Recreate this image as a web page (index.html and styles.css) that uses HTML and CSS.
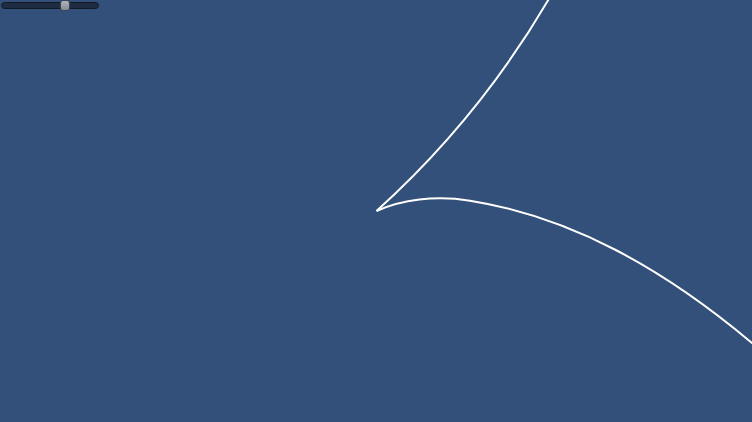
FILE: index.html
```html
<!DOCTYPE html>
<html>
<head>
<meta charset="utf-8">
<link rel="stylesheet" href="styles.css">
</head>
<body>
<div class="stage">
  <div class="toolbar">
    <div class="slider">
      <div class="track"></div>
      <div class="thumb"></div>
    </div>
  </div>
  <svg class="canvas" width="752" height="422" viewBox="0 0 752 422">
    <path class="curve" d="M550,-3 Q480,117.5 376.5,211"/>
    <path class="curve" d="M376.5,211 C401.5,199.75 435,195.1 470,200.7 C570,216.7 662,267.4 752,343 L758,348"/>
  </svg>
</div>
</body>
</html>
```

FILE: styles.css
```css
html, body {
  margin: 0;
  padding: 0;
  background: #32507a;
  overflow: hidden;
}
.stage {
  position: relative;
  width: 752px;
  height: 422px;
  background: #32507a;
}
.toolbar {
  position: relative;
  z-index: 2;
  padding: 0 0 0 1px;
}
.slider {
  position: relative;
  width: 98px;
  height: 11px;
}
.track {
  position: absolute;
  left: 0;
  top: 2px;
  width: 98px;
  height: 7px;
  box-sizing: border-box;
  border: 1px solid #121a28;
  border-radius: 4px;
  background: #1e2b40;
}
.thumb {
  position: absolute;
  left: 59px;
  top: 0;
  width: 10px;
  height: 11px;
  box-sizing: border-box;
  border: 1px solid #3c4350;
  border-radius: 3px;
  background: linear-gradient(#aeb3ba, #868c95);
}
.canvas {
  position: absolute;
  left: 0;
  top: 0;
  z-index: 1;
}
.curve {
  fill: none;
  stroke: #ffffff;
  stroke-width: 2;
  stroke-linejoin: round;
}
```
